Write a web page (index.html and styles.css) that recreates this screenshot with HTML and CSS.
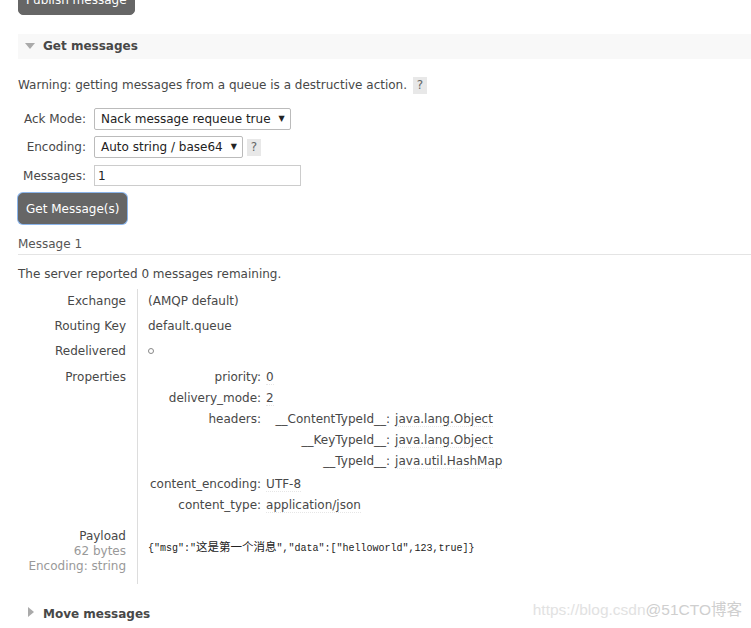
FILE: index.html
```html
<!DOCTYPE html>
<html lang="en">
<head>
    <meta charset="UTF-8">
    <title>Queue - Get messages</title>
    <link rel="stylesheet" href="styles.css">
</head>
<body>
    <div class="page">
        <div class="publish">
            <button class="btn">Publish message</button>
        </div>

        <div class="section">
            <h2 class="section-head"><span class="arrow down"></span>Get messages</h2>
            <div class="section-body">
                <p class="warning">Warning: getting messages from a queue is a destructive action. <span class="help">?</span></p>

                <table class="form">
                    <tr>
                        <th>Ack Mode:</th>
                        <td><span class="select">Nack message requeue true<span class="caret">&#9660;</span></span></td>
                    </tr>
                    <tr>
                        <th>Encoding:</th>
                        <td><span class="select">Auto string / base64<span class="caret">&#9660;</span></span><span class="help">?</span></td>
                    </tr>
                    <tr>
                        <th>Messages:</th>
                        <td><input type="text" value="1"></td>
                    </tr>
                </table>

                <button class="btn focused">Get Message(s)</button>

                <h3 class="msg-title">Message 1</h3>
                <p class="remaining">The server reported 0 messages remaining.</p>

                <table class="facts">
                    <tr>
                        <th>Exchange</th>
                        <td>(AMQP default)</td>
                    </tr>
                    <tr>
                        <th>Routing Key</th>
                        <td>default.queue</td>
                    </tr>
                    <tr class="redelivered">
                        <th>Redelivered</th>
                        <td><span class="bool"></span></td>
                    </tr>
                    <tr>
                        <th>Properties</th>
                        <td>
                            <table class="props">
                                <tr><th>priority:</th><td><abbr>0</abbr></td></tr>
                                <tr><th>delivery_mode:</th><td><abbr>2</abbr></td></tr>
                                <tr>
                                    <th>headers:</th>
                                    <td>
                                        <table class="props inner">
                                            <tr><th>__ContentTypeId__:</th><td><abbr>java.lang.Object</abbr></td></tr>
                                            <tr><th>__KeyTypeId__:</th><td><abbr>java.lang.Object</abbr></td></tr>
                                            <tr><th>__TypeId__:</th><td><abbr>java.util.HashMap</abbr></td></tr>
                                        </table>
                                    </td>
                                </tr>
                                <tr><th>content_encoding:</th><td><abbr>UTF-8</abbr></td></tr>
                                <tr><th>content_type:</th><td><abbr>application/json</abbr></td></tr>
                            </table>
                        </td>
                    </tr>
                    <tr class="payload-row">
                        <th>Payload<br><span class="sub">62 bytes</span><br><span class="sub">Encoding: string</span></th>
                        <td><pre class="payload">{"msg":"<span class="cjk">这是第一个消息</span>","data":["helloworld",123,true]}</pre></td>
                    </tr>
                </table>
            </div>
        </div>

        <div class="section">
            <h2 class="section-head plain"><span class="arrow right"></span>Move messages</h2>
        </div>
    </div>
    <div class="watermark">https://blog.csdn<b>@51CTO博客</b></div>
</body>
</html>
```

FILE: styles.css
```css
body {
    margin: 0;
    font: 12px "DejaVu Sans", Verdana, sans-serif;
    color: #484848;
    background: #fff;
    overflow: hidden;
}
.page {
    padding-left: 18px;
}
.publish {
    margin-top: -16px;
    height: 50px;
}
.btn {
    font: 12px "DejaVu Sans", Verdana, sans-serif;
    background: #666;
    color: #fff;
    border: 1px solid #666;
    border-radius: 5px;
    padding: 7px 7px;
    height: 31px;
    cursor: pointer;
}
.btn.focused {
    box-shadow: 0 0 0 1px #8ab4ea;
}
.section-head {
    margin: 0;
    height: 25px;
    line-height: 25px;
    background: #f8f8f8;
    font-size: 12px;
    font-weight: bold;
    color: #484848;
    padding-left: 7px;
}
.section-head.plain {
    background: none;
    margin-top: 18px;
}
.arrow {
    display: inline-block;
    width: 0;
    height: 0;
    margin-right: 8px;
    vertical-align: 1px;
}
.arrow.down {
    border-left: 5px solid transparent;
    border-right: 5px solid transparent;
    border-top: 6px solid #aaa;
}
.arrow.right {
    border-top: 5px solid transparent;
    border-bottom: 5px solid transparent;
    border-left: 6px solid #aaa;
    margin-left: 3px;
    margin-right: 9px;
}
.warning {
    margin: 18px 0 11px;
}
.help {
    display: inline-block;
    background: #e8e8e8;
    color: #666;
    width: 14px;
    text-align: center;
    line-height: 17px;
    margin-left: 2px;
}
.form .help {
    margin-left: 4px;
}
table {
    border-collapse: collapse;
}
.form th {
    font-weight: normal;
    text-align: right;
    padding: 3px 8px 3px 0;
    width: 68px;
}
.form td {
    padding: 3px 0;
}
.form tr:last-child th,
.form tr:last-child td {
    padding-top: 4px;
}
.select {
    display: inline-block;
    box-sizing: border-box;
    height: 22px;
    line-height: 20px;
    border: 1px solid #bbb;
    border-radius: 2px;
    padding: 0 5px 0 6px;
    color: #222;
    font-size: 12px;
}
.caret {
    font-size: 8px;
    margin-left: 8px;
    vertical-align: 2px;
}
.form input {
    box-sizing: border-box;
    width: 207px;
    height: 21px;
    border: 1px solid #ccc;
    font: 12px "DejaVu Sans", Verdana, sans-serif;
    padding: 0 3px;
    color: #222;
}
.form + .btn {
    margin-top: 4px;
}
.msg-title {
    margin: 13px 0 0;
    font-size: 12px;
    font-weight: normal;
    color: #555;
    padding-bottom: 3px;
    border-bottom: 1px solid #e4e4e4;
}
.remaining {
    margin: 12px 0 8px;
}
.facts > tbody > tr > th {
    font-weight: normal;
    text-align: right;
    vertical-align: top;
    width: 108px;
    padding: 5px 11px 6px 0;
    border-right: 1px solid #ddd;
}
.facts > tbody > tr > td {
    padding: 5px 10px 6px;
    vertical-align: top;
}
.facts > tbody > tr.redelivered > th,
.facts > tbody > tr.redelivered > td {
    padding-bottom: 7px;
}
.bool {
    display: inline-block;
    width: 4px;
    height: 4px;
    border: 1px solid #888;
    border-radius: 50%;
    vertical-align: 1px;
}
.props {
    margin-left: 2px;
}
.props th {
    font-weight: normal;
    text-align: right;
    white-space: nowrap;
    padding: 3px 5px 4px 0;
    vertical-align: top;
}
.props td {
    padding: 3px 0 4px;
    vertical-align: top;
}
.facts .props:not(.inner) {
    margin-top: -3px;
}
.props > tbody > tr > th {
    width: 107px;
}
.props.inner {
    margin: -3px 0 -2px 3px;
}
.props.inner > tbody > tr > th {
    width: 121px;
}
abbr {
    border-bottom: 1px dotted #e6e6e6;
    text-decoration: none;
}
.payload-row th {
    padding-top: 7px !important;
    padding-bottom: 10px !important;
    line-height: 15px;
}
.payload-row td {
    padding-top: 16px !important;
}
.sub {
    color: #999;
}
.payload {
    margin: 0;
    font: 10px "Liberation Mono", "Noto Sans CJK SC", monospace;
    color: #222;
}
.cjk {
    font: 11.5px "Noto Sans CJK SC", sans-serif;
}
.watermark {
    position: absolute;
    right: 9px;
    bottom: 9px;
    font: 15.5px "Liberation Sans", "Noto Sans CJK SC", sans-serif;
    color: #e2e2e2;
}
.watermark b {
    font-weight: normal;
    color: #cfcfcf;
}
```
